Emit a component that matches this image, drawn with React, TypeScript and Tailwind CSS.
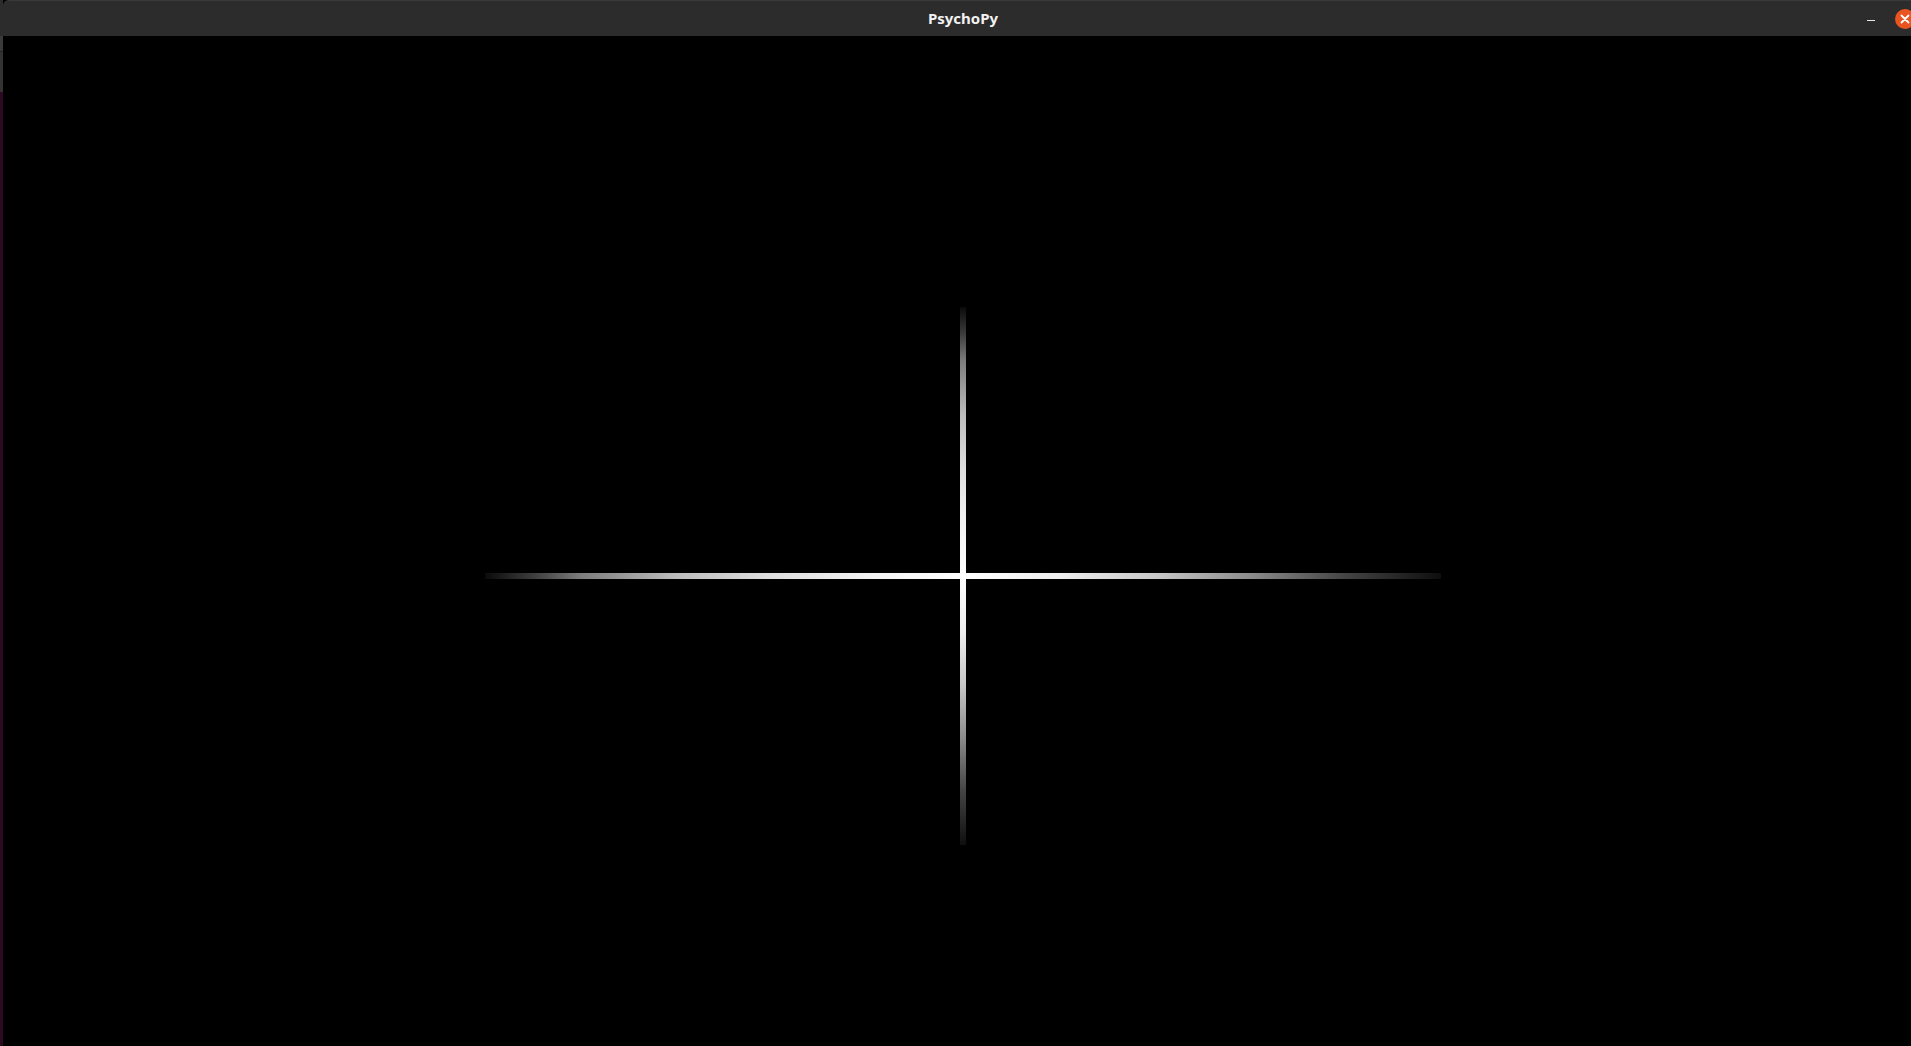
import React from "react";

export default function App() {
  return (
    <div className="w-[1911px] h-[1046px] overflow-hidden bg-black flex" style={{ fontFamily: '"Noto Sans", "Open Sans", sans-serif' }}>
      {/* left desktop strip */}
      <div className="w-[3px] h-full flex flex-col shrink-0">
        <div className="h-[36px] bg-[#2c2c2c]" />
        <div className="h-[15px] bg-[#3a3a3a]" />
        <div className="h-[1px] bg-[#222222]" />
        <div className="h-[40px] bg-[#333333]" />
        <div className="flex-1 bg-[#2c0b22]" />
      </div>

      {/* window */}
      <div className="flex-1 flex flex-col">
        <div className="h-[36px] shrink-0 bg-[#2c2c2c] border-t border-[#3a3a3a] rounded-tl-[6px] flex items-center">
          <div className="flex-1 flex justify-center pl-[56px]">
            <span className="text-[15px] font-bold text-[#f2f2f2] leading-none">PsychoPy</span>
          </div>
          <div className="flex items-center gap-[20px] mr-[-4px]">
            <div className="w-[8px] h-[1.5px] bg-[#e8e8e8] mt-[4px]" />
            <div className="w-[20px] h-[20px] rounded-full bg-[#e95420] flex items-center justify-center">
              <svg width="10" height="10" viewBox="0 0 10 10">
                <path d="M1.5 1.5 L8.5 8.5 M8.5 1.5 L1.5 8.5" stroke="#ffffff" strokeWidth="1.8" strokeLinecap="round" />
              </svg>
            </div>
          </div>
        </div>

        <div className="flex-1 bg-black">
          <svg width="1908" height="1010" viewBox="0 0 1908 1010" className="block">
            <defs>
              <linearGradient id="hg" x1="0" y1="0" x2="1" y2="0">
                <stop offset="0" stopColor="#0a0a0a" />
                <stop offset="0.05" stopColor="#3c3c3c" />
                <stop offset="0.1" stopColor="#7c7c7c" />
                <stop offset="0.2" stopColor="#bcbcbc" />
                <stop offset="0.3" stopColor="#dedede" />
                <stop offset="0.4" stopColor="#f2f2f2" />
                <stop offset="0.5" stopColor="#ffffff" />
                <stop offset="0.6" stopColor="#eeeeee" />
                <stop offset="0.7" stopColor="#c8c8c8" />
                <stop offset="0.8" stopColor="#8c8c8c" />
                <stop offset="0.9" stopColor="#444444" />
                <stop offset="1" stopColor="#0e0e0e" />
              </linearGradient>
              <linearGradient id="vg" x1="0" y1="0" x2="0" y2="1">
                <stop offset="0" stopColor="#0a0a0a" />
                <stop offset="0.05" stopColor="#3c3c3c" />
                <stop offset="0.1" stopColor="#7c7c7c" />
                <stop offset="0.2" stopColor="#bcbcbc" />
                <stop offset="0.3" stopColor="#dedede" />
                <stop offset="0.4" stopColor="#f2f2f2" />
                <stop offset="0.5" stopColor="#ffffff" />
                <stop offset="0.6" stopColor="#eeeeee" />
                <stop offset="0.7" stopColor="#c8c8c8" />
                <stop offset="0.8" stopColor="#8c8c8c" />
                <stop offset="0.9" stopColor="#444444" />
                <stop offset="1" stopColor="#0e0e0e" />
              </linearGradient>
            </defs>
            <rect x="482" y="537" width="956" height="6" fill="url(#hg)" />
            <rect x="957" y="271" width="6" height="538" fill="url(#vg)" />
          </svg>
        </div>
      </div>
    </div>
  );
}
